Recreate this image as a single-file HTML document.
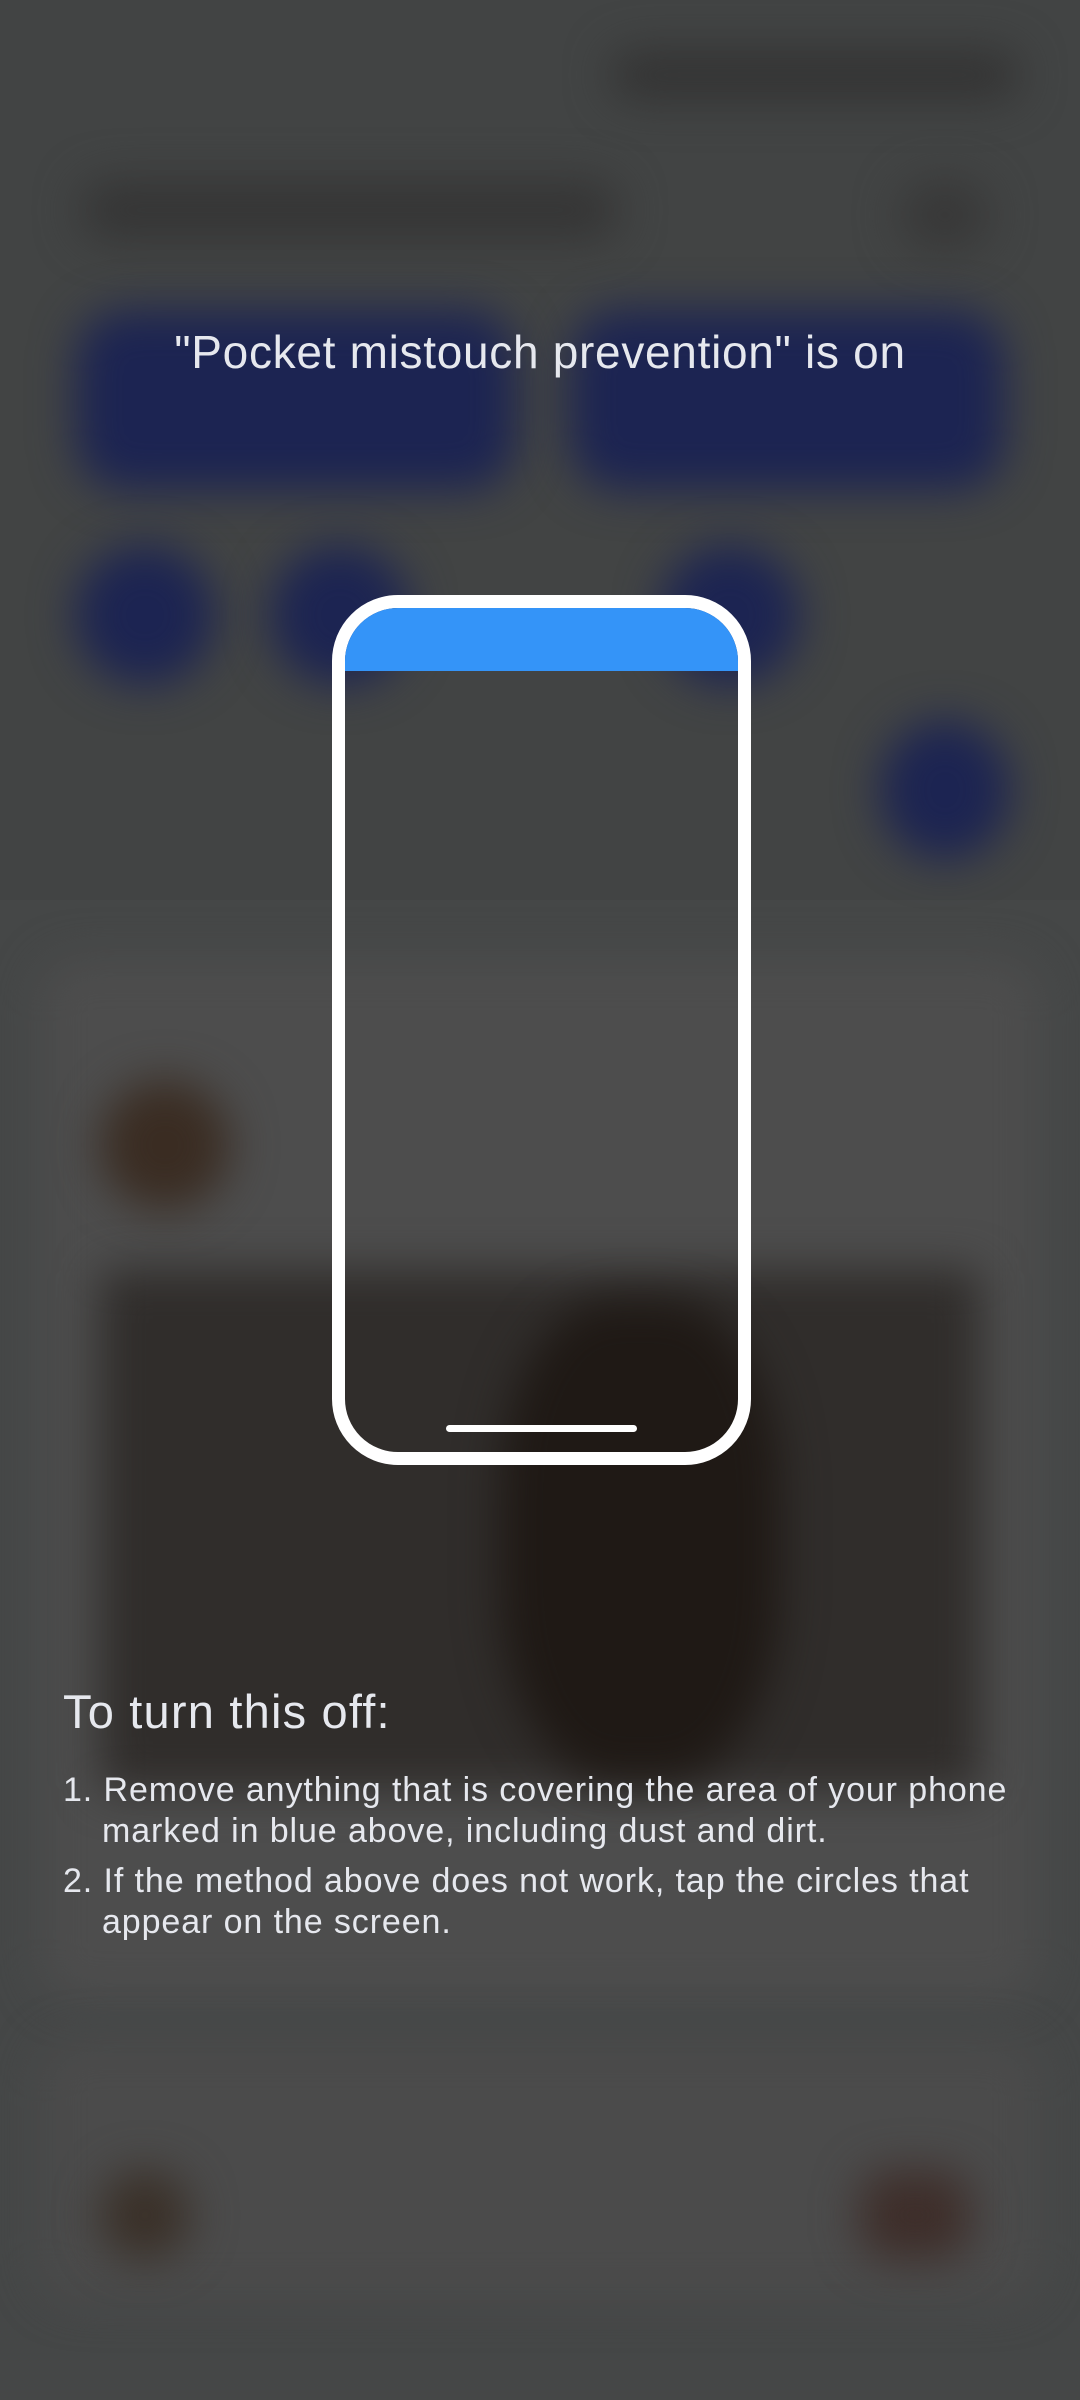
<!DOCTYPE html>
<html><head><meta charset="utf-8"><style>
html,body{margin:0;padding:0;}
body{width:1080px;height:2400px;position:relative;overflow:hidden;background:#454747;font-family:"Liberation Sans",sans-serif;}
.b{position:absolute;filter:blur(22px);}
.t{position:absolute;color:#e6e8ee;white-space:nowrap;}
</style></head><body>
<div class="b" style="left:0;top:0;width:1080px;height:900px;background:#424444;filter:none"></div>
<div class="b" style="left:610px;top:50px;width:410px;height:50px;background:#333;border-radius:25px"></div>
<div class="b" style="left:80px;top:180px;width:540px;height:60px;background:#353535;border-radius:30px"></div>
<div class="b" style="left:900px;top:180px;width:90px;height:70px;background:#383838;border-radius:40px"></div>
<div class="b" style="left:76px;top:310px;width:440px;height:180px;background:#1c2452;border-radius:50px"></div>
<div class="b" style="left:570px;top:310px;width:435px;height:180px;background:#1c2452;border-radius:50px"></div>
<div class="b" style="left:75px;top:545px;width:140px;height:140px;background:#1c2452;border-radius:50%"></div>
<div class="b" style="left:270px;top:545px;width:140px;height:140px;background:#1c2452;border-radius:50%"></div>
<div class="b" style="left:660px;top:545px;width:140px;height:140px;background:#1c2452;border-radius:50%"></div>
<div class="b" style="left:880px;top:720px;width:130px;height:140px;background:#1c2452;border-radius:50%"></div>
<div class="b" style="left:40px;top:960px;width:1000px;height:1040px;background:#4d4d4d;border-radius:40px"></div>
<div class="b" style="left:100px;top:1080px;width:130px;height:130px;background:#3a2c22;border-radius:50%"></div>
<div class="b" style="left:100px;top:1270px;width:880px;height:520px;background:#302d2b;border-radius:10px"></div>
<div class="b" style="left:500px;top:1300px;width:280px;height:480px;background:#1f1915;border-radius:40%"></div>
<div class="b" style="left:40px;top:2040px;width:1000px;height:260px;background:#4b4b4b;border-radius:40px"></div>
<div class="b" style="left:100px;top:2170px;width:90px;height:90px;background:#3a3028;border-radius:50%"></div>
<div class="b" style="left:860px;top:2170px;width:110px;height:90px;background:#3e2e2a;border-radius:30%"></div>

<div class="t" style="left:0;width:1080px;text-align:center;top:325px;font-size:46px;letter-spacing:0.7px">"Pocket mistouch prevention" is on</div>

<div style="position:absolute;left:332px;top:595px;width:419px;height:870px;box-sizing:border-box;border:13px solid #fff;border-radius:66px;overflow:hidden;">
 <div style="position:absolute;left:0;top:0;right:0;height:63px;background:#3494f8"></div>
</div>
<div style="position:absolute;left:446px;top:1425px;width:191px;height:7px;background:#fff;border-radius:4px"></div>

<div class="t" style="left:63px;top:1684px;font-size:47px;letter-spacing:1.2px">To turn this off:</div>
<div class="t" style="left:63px;top:1770px;font-size:34px;line-height:41px;letter-spacing:0.9px">1. Remove anything that is covering the area of your phone<br><span style="padding-left:39px">marked in blue above, including dust and dirt.</span></div>
<div class="t" style="left:63px;top:1861px;font-size:34px;line-height:41px;letter-spacing:0.9px">2. If the method above does not work, tap the circles that<br><span style="padding-left:39px">appear on the screen.</span></div>
</body></html>
